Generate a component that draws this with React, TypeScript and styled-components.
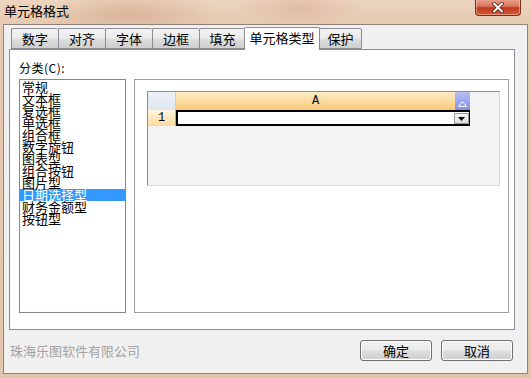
import React from "react";
import styled, { createGlobalStyle } from "styled-components";

const GlobalStyle = createGlobalStyle`
  html, body {
    margin: 0;
    padding: 0;
    background: #e4c7ad;
  }
  * {
    box-sizing: border-box;
  }
`;

const cjk = `"Noto Sans CJK SC", "Noto Sans", sans-serif`;

const Window = styled.div`
  width: 531px;
  height: 378px;
  display: flex;
  flex-direction: column;
  background: radial-gradient(ellipse 90px 22px at 130px 14px, rgba(205, 160, 130, 0.55), transparent),
    radial-gradient(ellipse 60px 18px at 300px 8px, rgba(215, 165, 140, 0.5), transparent),
    linear-gradient(to bottom, #ecd4bf 0px, #e6cab1 24px, #e2c4aa 100%);
  font-family: ${cjk};
`;

const TitleBar = styled.div`
  height: 24px;
  display: flex;
  align-items: flex-start;
  justify-content: space-between;
  padding-left: 4px;
  padding-right: 10px;
`;

const Title = styled.div`
  font-size: 13px;
  line-height: 22px;
  color: #000;
`;

const CloseButton = styled.div`
  width: 46px;
  height: 17px;
  margin-top: -1px;
  border: 1px solid #7b2d1c;
  border-top: none;
  border-radius: 0 0 4px 4px;
  background: linear-gradient(to bottom, #e9a591 0%, #d9765d 45%, #c2391f 55%, #d65a39 100%);
  display: flex;
  align-items: center;
  justify-content: center;
  box-shadow: inset 0 0 0 1px rgba(255, 210, 190, 0.5);
`;

const Client = styled.div`
  flex: 1;
  margin: 0 3px 4px 3px;
  background: #f0f0f0;
  border: 1px solid #8f8378;
  display: flex;
  flex-direction: column;
  padding: 0 14px 0 5px;
`;

const TabStrip = styled.div`
  height: 24px;
  display: flex;
  align-items: flex-end;
  padding-left: 2px;
  position: relative;
  z-index: 1;
`;

const Tab = styled.div<{ $active?: boolean; $w: number }>`
  width: ${(p) => p.$w}px;
  height: ${(p) => (p.$active ? 23 : 21)}px;
  margin-bottom: ${(p) => (p.$active ? -1 : 0)}px;
  margin-left: ${(p) => (p.$active ? -1 : 0)}px;
  margin-right: ${(p) => (p.$active ? -1 : 0)}px;
  border: 1px solid #898c95;
  border-bottom: ${(p) => (p.$active ? "none" : "1px solid #898c95")};
  border-right: ${(p) => (p.$active ? "1px solid #898c95" : "none")};
  border-radius: 2px 2px 0 0;
  background: ${(p) =>
    p.$active ? "#ffffff" : "linear-gradient(to bottom, #f3f3f3 0%, #ebebeb 45%, #dddddd 55%, #cfcfcf 100%)"};
  font-size: 13px;
  line-height: ${(p) => (p.$active ? 20 : 19)}px;
  text-align: center;
  color: #000;
  position: relative;
  z-index: ${(p) => (p.$active ? 2 : 1)};
  &:last-child {
    border-right: 1px solid #898c95;
  }
`;

const Panel = styled.div`
  width: 506px;
  height: 281px;
  background: #fff;
  border: 1px solid #898c95;
  padding: 11px 5px 0 9px;
  display: flex;
  flex-direction: column;
`;

const Label = styled.div`
  font-size: 12px;
  line-height: 14px;
  height: 18px;
  color: #000;
  letter-spacing: 0.5px;
`;

const Body = styled.div`
  display: flex;
  gap: 8px;
`;

const ListBox = styled.div`
  width: 107px;
  height: 234px;
  border: 1px solid #828790;
  padding-top: 1px;
`;

const ListItem = styled.div<{ $selected?: boolean }>`
  height: 12px;
  font-size: 13px;
  line-height: 12px;
  padding-left: 2px;
  white-space: nowrap;
  color: ${(p) => (p.$selected ? "#fff" : "#000")};
  background: ${(p) => (p.$selected ? "#3399ff" : "transparent")};
`;

const Preview = styled.div`
  width: 375px;
  height: 234px;
  border: 1px solid #a0a0a0;
  padding: 11px 0 0 12px;
`;

const Sheet = styled.div`
  width: 353px;
  height: 95px;
  background: #f3f3f3;
  border-top: 1px solid #8c8c8c;
  border-left: 1px solid #8c8c8c;
  border-right: 1px solid #d8d8d8;
  border-bottom: 1px solid #d8d8d8;
  display: grid;
  grid-template-columns: 28px 279px 15px;
  grid-template-rows: 18px 16px;
  align-content: start;
`;

const Corner = styled.div`
  background: linear-gradient(to bottom, #eef2f9, #dde5f0);
  border-right: 1px solid #c8cdd6;
`;

const ColHeader = styled.div`
  background: linear-gradient(to bottom, #fdebc6 0%, #fbd99a 60%, #f6c574 100%);
  font-family: "Liberation Mono", monospace;
  font-size: 12px;
  line-height: 18px;
  text-align: center;
  color: #000;
`;

const SortBox = styled.div`
  background: linear-gradient(to bottom, #b6c0f4, #8391e6);
  display: flex;
  align-items: flex-end;
  justify-content: center;
  padding-bottom: 3px;
`;

const RowHeader = styled.div`
  background: linear-gradient(to bottom, #fff6e0, #fbd99c);
  border-right: 1px solid #c9a96a;
  font-family: "Liberation Mono", monospace;
  font-size: 12px;
  line-height: 16px;
  text-align: center;
  color: #000;
`;

const Cell = styled.div`
  grid-column: 2 / span 2;
  background: #fff;
  border: 2px solid #000;
  border-right-width: 1px;
  display: flex;
  justify-content: flex-end;
  align-items: stretch;
  padding: 1px 0 0 0;
`;

const DropButton = styled.div`
  width: 15px;
  background: linear-gradient(to bottom, #f7f7f7, #dcdcdc);
  border: 1px solid #9a9a9a;
  display: flex;
  align-items: center;
  justify-content: center;
`;

const Footer = styled.div`
  flex: 1;
  display: flex;
  align-items: center;
  justify-content: space-between;
  padding-left: 1px;
  padding-bottom: 2px;
`;

const Company = styled.div`
  font-size: 13px;
  color: #a3a3a3;
`;

const Buttons = styled.div`
  display: flex;
  gap: 9px;
`;

const Button = styled.button`
  width: 72px;
  height: 21px;
  border: 1px solid #707070;
  border-radius: 3px;
  background: linear-gradient(to bottom, #f2f2f2 0%, #ebebeb 45%, #dddddd 55%, #cfcfcf 100%);
  box-shadow: inset 0 0 0 1px #fcfcfc;
  font-family: ${cjk};
  font-size: 13px;
  line-height: 17px;
  color: #000;
  padding: 0;
`;

const tabs = [
  { label: "数字", w: 47 },
  { label: "对齐", w: 47 },
  { label: "字体", w: 47 },
  { label: "边框", w: 47 },
  { label: "填充", w: 46 },
  { label: "单元格类型", w: 76, active: true },
  { label: "保护", w: 43 },
];

const categories = [
  "常规",
  "文本框",
  "复选框",
  "单选框",
  "组合框",
  "数字旋钮",
  "图表型",
  "组合按钮",
  "图片型",
  "日期选择型",
  "财务金额型",
  "按钮型",
];

export default function App() {
  return (
    <>
      <GlobalStyle />
      <Window>
        <TitleBar>
          <Title>单元格格式</Title>
          <CloseButton>
            <svg width="12" height="11" viewBox="0 0 12 11">
              <path d="M2 1.5 L10 9.5 M10 1.5 L2 9.5" stroke="#5a1a10" strokeWidth="3.6" strokeLinecap="round" />
              <path d="M2 1.5 L10 9.5 M10 1.5 L2 9.5" stroke="#ffffff" strokeWidth="2" strokeLinecap="round" />
            </svg>
          </CloseButton>
        </TitleBar>
        <Client>
          <TabStrip>
            {tabs.map((t) => (
              <Tab key={t.label} $w={t.w} $active={t.active}>
                {t.label}
              </Tab>
            ))}
          </TabStrip>
          <Panel>
            <Label>分类(C):</Label>
            <Body>
              <ListBox>
                {categories.map((c) => (
                  <ListItem key={c} $selected={c === "日期选择型"}>
                    {c}
                  </ListItem>
                ))}
              </ListBox>
              <Preview>
                <Sheet>
                  <Corner />
                  <ColHeader>A</ColHeader>
                  <SortBox>
                    <svg width="9" height="6" viewBox="0 0 9 6">
                      <path d="M4.5 0.5 L8.5 5.5 L0.5 5.5 Z" fill="none" stroke="#ffffff" strokeWidth="1" />
                    </svg>
                  </SortBox>
                  <RowHeader>1</RowHeader>
                  <Cell>
                    <DropButton>
                      <svg width="7" height="4" viewBox="0 0 7 4">
                        <path d="M0 0 L7 0 L3.5 4 Z" fill="#000" />
                      </svg>
                    </DropButton>
                  </Cell>
                </Sheet>
              </Preview>
            </Body>
          </Panel>
          <Footer>
            <Company>珠海乐图软件有限公司</Company>
            <Buttons>
              <Button>确定</Button>
              <Button>取消</Button>
            </Buttons>
          </Footer>
        </Client>
      </Window>
    </>
  );
}
